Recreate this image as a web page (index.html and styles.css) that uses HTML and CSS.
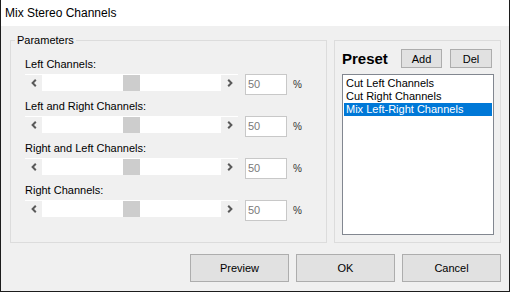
FILE: index.html
```html
<!DOCTYPE html>
<html>
<head>
<meta charset="utf-8">
<link rel="stylesheet" href="styles.css">
</head>
<body>
<div class="window">
  <div class="titlebar">Mix Stereo Channels</div>
  <div class="client">
    <div class="main">
      <fieldset class="params">
        <legend>Parameters</legend>
        <div class="rows">
          <div class="param">
            <div class="label">Left Channels:</div>
            <div class="controls">
              <div class="scrollbar">
                <span class="arrow"><svg width="6" height="8" viewBox="0 0 6 8"><path d="M4.8 0.8 L1.6 4 L4.8 7.2" fill="none" stroke="#5a5a5a" stroke-width="2"/></svg></span>
                <span class="track"><span class="thumb"></span></span>
                <span class="arrow"><svg width="6" height="8" viewBox="0 0 6 8"><path d="M1.2 0.8 L4.4 4 L1.2 7.2" fill="none" stroke="#5a5a5a" stroke-width="2"/></svg></span>
              </div>
              <div class="edit">50</div>
              <span class="pct">%</span>
            </div>
          </div>
          <div class="param">
            <div class="label">Left and Right Channels:</div>
            <div class="controls">
              <div class="scrollbar">
                <span class="arrow"><svg width="6" height="8" viewBox="0 0 6 8"><path d="M4.8 0.8 L1.6 4 L4.8 7.2" fill="none" stroke="#5a5a5a" stroke-width="2"/></svg></span>
                <span class="track"><span class="thumb"></span></span>
                <span class="arrow"><svg width="6" height="8" viewBox="0 0 6 8"><path d="M1.2 0.8 L4.4 4 L1.2 7.2" fill="none" stroke="#5a5a5a" stroke-width="2"/></svg></span>
              </div>
              <div class="edit">50</div>
              <span class="pct">%</span>
            </div>
          </div>
          <div class="param">
            <div class="label">Right and Left Channels:</div>
            <div class="controls">
              <div class="scrollbar">
                <span class="arrow"><svg width="6" height="8" viewBox="0 0 6 8"><path d="M4.8 0.8 L1.6 4 L4.8 7.2" fill="none" stroke="#5a5a5a" stroke-width="2"/></svg></span>
                <span class="track"><span class="thumb"></span></span>
                <span class="arrow"><svg width="6" height="8" viewBox="0 0 6 8"><path d="M1.2 0.8 L4.4 4 L1.2 7.2" fill="none" stroke="#5a5a5a" stroke-width="2"/></svg></span>
              </div>
              <div class="edit">50</div>
              <span class="pct">%</span>
            </div>
          </div>
          <div class="param">
            <div class="label">Right Channels:</div>
            <div class="controls">
              <div class="scrollbar">
                <span class="arrow"><svg width="6" height="8" viewBox="0 0 6 8"><path d="M4.8 0.8 L1.6 4 L4.8 7.2" fill="none" stroke="#5a5a5a" stroke-width="2"/></svg></span>
                <span class="track"><span class="thumb"></span></span>
                <span class="arrow"><svg width="6" height="8" viewBox="0 0 6 8"><path d="M1.2 0.8 L4.4 4 L1.2 7.2" fill="none" stroke="#5a5a5a" stroke-width="2"/></svg></span>
              </div>
              <div class="edit">50</div>
              <span class="pct">%</span>
            </div>
          </div>
        </div>
      </fieldset>
      <div class="preset">
        <div class="preset-head">
          <span class="preset-title">Preset</span>
          <button class="btn btn-add">Add</button>
          <button class="btn btn-del">Del</button>
        </div>
        <ul class="list">
          <li>Cut Left Channels</li>
          <li>Cut Right Channels</li>
          <li class="selected">Mix Left-Right Channels</li>
        </ul>
      </div>
    </div>
    <div class="actions">
      <button class="btn btn-action">Preview</button>
      <button class="btn btn-action">OK</button>
      <button class="btn btn-action">Cancel</button>
    </div>
  </div>
</div>
</body>
</html>
```

FILE: styles.css
```css
body {
  margin: 0;
  font-family: "Liberation Sans", Arial, sans-serif;
  font-size: 11px;
  color: #000;
  background: #fff;
}

.window {
  width: 510px;
  height: 292px;
  box-sizing: border-box;
  border: 1px solid #1c1c1c;
  border-top: 0;
  background: #f0f0f0;
  display: flex;
  flex-direction: column;
}

.titlebar {
  height: 26px;
  line-height: 26px;
  background: #fff;
  padding-left: 4px;
  font-size: 12px;
  flex: none;
}

.client {
  flex: 1;
  padding: 8px 8px 0 9px;
  display: flex;
  flex-direction: column;
}

.main {
  display: flex;
  gap: 7px;
  height: 209px;
}

.params {
  margin: 0;
  padding: 11px 0 0 0;
  border: 1px solid #dcdcdc;
  width: 317px;
  box-sizing: border-box;
  min-width: 0;
}

.params legend {
  padding: 0 2px;
  margin-left: 4px;
  line-height: 13px;
}

.rows {
  padding-left: 14px;
}

.param {
  margin-bottom: 5px;
}

.label {
  height: 13px;
  line-height: 13px;
  margin-bottom: 3px;
}

.controls {
  display: flex;
  align-items: flex-start;
}

.scrollbar {
  width: 213px;
  height: 17px;
  box-sizing: border-box;
  border-top: 1px solid #fff;
  display: flex;
}

.arrow {
  width: 17px;
  display: flex;
  align-items: center;
  justify-content: center;
}

.arrow svg {
  display: block;
}

.track {
  flex: 1;
  background: #fff;
  display: flex;
  justify-content: center;
}

.thumb {
  width: 17px;
  background: #cdcdcd;
}

.edit {
  width: 42px;
  height: 21px;
  box-sizing: border-box;
  border: 1px solid #c8c8c8;
  background: #fff;
  margin-left: 7px;
  padding-left: 2px;
  line-height: 19px;
  color: #7a7a7a;
}

.pct {
  margin-left: 6px;
  line-height: 21px;
  font-size: 10px;
  color: #333;
}

.preset {
  width: 167px;
  box-sizing: border-box;
  border: 1px solid #dcdcdc;
  margin-top: 6px;
  padding: 8px 6px 7px 7px;
  display: flex;
  flex-direction: column;
}

.preset-head {
  display: flex;
  align-items: center;
  height: 19px;
  gap: 8px;
  padding-right: 2px;
  margin-bottom: 6px;
}

.preset-title {
  flex: 1;
  font-weight: bold;
  font-size: 15px;
}

.btn {
  font-family: inherit;
  font-size: 11px;
  color: #000;
  background: #e1e1e1;
  border: 1px solid #adadad;
  padding: 0;
  margin: 0;
  box-sizing: border-box;
}

.btn-add {
  width: 41px;
  height: 19px;
}

.btn-del {
  width: 42px;
  height: 19px;
}

.list {
  flex: 1;
  margin: 0;
  padding: 2px 1px;
  list-style: none;
  background: #fff;
  border: 1px solid #828790;
}

.list li {
  line-height: 13px;
  height: 13px;
  padding-left: 2px;
}

.list li.selected {
  background: #0078d7;
  color: #fff;
}

.actions {
  margin-top: 11px;
  display: flex;
  justify-content: flex-end;
  gap: 7px;
}

.btn-action {
  width: 99px;
  height: 28px;
}
```
